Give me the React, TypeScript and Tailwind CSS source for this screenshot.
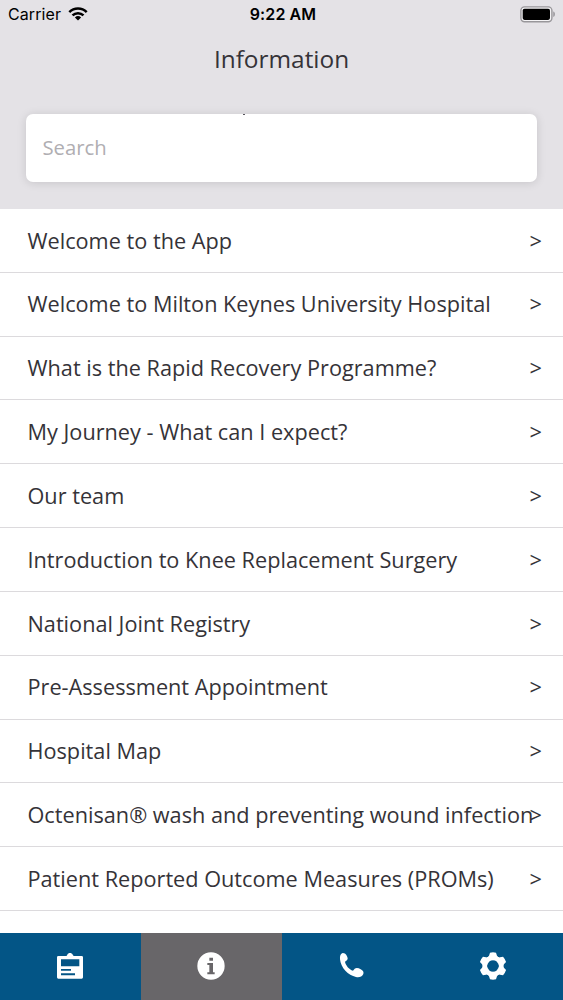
const topics = [
  "Welcome to the App",
  "Welcome to Milton Keynes University Hospital",
  "What is the Rapid Recovery Programme?",
  "My Journey - What can I expect?",
  "Our team",
  "Introduction to Knee Replacement Surgery",
  "National Joint Registry",
  "Pre-Assessment Appointment",
  "Hospital Map",
  "Octenisan® wash and preventing wound infection",
  "Patient Reported Outcome Measures (PROMs)",
];

function WifiIcon() {
  return (
    <svg width="20" height="14" viewBox="0 0 20 14" fill="none" stroke="black" strokeWidth="2.5">
      <path d="M1.3 5.1a12.3 12.3 0 0 1 17.4 0" />
      <path d="M4.5 8.4a7.8 7.8 0 0 1 11 0" />
      <path d="M10 13.6 6.9 10.5a4.5 4.5 0 0 1 6.2 0Z" fill="black" stroke="none" />
    </svg>
  );
}

function BatteryIcon() {
  return (
    <svg width="36" height="17" viewBox="0 0 36 17">
      <rect x="0.9" y="0.9" width="31" height="14.8" rx="3.6" fill="#f4f3f5" stroke="#98969a" strokeWidth="1.4" />
      <rect x="2.7" y="2.7" width="27.3" height="11.2" rx="1.8" fill="black" />
      <path d="M33.4 5.6c1.8.5 1.8 4.9 0 5.4Z" fill="#88868a" />
    </svg>
  );
}

function ClipboardIcon() {
  return (
    <svg width="28" height="28" viewBox="0 0 84 84" fill="white">
      <path
        fillRule="evenodd"
        d="M7 12H31C34 11 34 3 42 3S50 11 54 12H77Q81 12 81 16V76Q81 80 77 80H7Q3 80 3 76V16Q3 12 7 12ZM15 22V43H70V22ZM15 51V56.500H45V51ZM15 64V69.500H57V64Z"
      />
    </svg>
  );
}

function InfoIcon() {
  return (
    <svg width="28" height="28" viewBox="0 0 84 84" fill="white">
      <path
        fillRule="evenodd"
        d="M42 1A41 41 0 1 0 42 83A41 41 0 1 0 42 1ZM37 17H48V26H37ZM31 33H48V61H53V67H31V61H37V39H31Z"
      />
    </svg>
  );
}

function PhoneIcon() {
  return (
    <svg width="28" height="28" viewBox="84 81 84 84" fill="white">
      <path d="M98 84C104 84 108 87 111 94C114 100 114 104 109 107L105 110C107 121 117 133 129 137L134 131C139 128 146 129 152 133C159 137 162 141 160 147C156 155 148 158 138 156C115 152 92 128 90 103C89 92 92 86 98 84Z" />
    </svg>
  );
}

function GearIcon() {
  const tooth = "M-9 -40Q0 -42 9 -40L12 -31Q14 -27 20 -24L0 -14L-20 -24Q-14 -27 -12 -31Z";
  return (
    <svg width="28" height="28" viewBox="-42 -42 84 84" fill="white">
      <circle r="23.500" fill="none" stroke="white" strokeWidth="13" />
      {[0, 60, 120, 180, 240, 300].map((angle) => (
        <path key={angle} d={tooth} transform={`rotate(${angle})`} />
      ))}
      <circle r="17" fill="#035586" />
    </svg>
  );
}

const tabs = [
  { label: "Plan", active: false, icon: <ClipboardIcon /> },
  { label: "Information", active: true, icon: <InfoIcon /> },
  { label: "Call", active: false, icon: <PhoneIcon /> },
  { label: "Settings", active: false, icon: <GearIcon /> },
];

export default function App() {
  return (
    <div className="flex h-[1000px] w-[563px] flex-col overflow-hidden bg-white font-['Open_Sans',sans-serif] text-[#353338]">
      <header className="h-[209px] shrink-0 bg-[#e4e2e6]">
        <div className="grid h-7 grid-cols-3 items-center pl-2 pr-[7px] font-['Inter',sans-serif] text-black">
          <div className="flex items-center gap-[7px]">
            <span className="text-[16px] tracking-[0.1px]">Carrier</span>
            <WifiIcon />
          </div>
          <span className="pl-[2px] text-center text-[16px] font-semibold tracking-[0.1px]">9:22 AM</span>
          <div className="flex justify-end">
            <BatteryIcon />
          </div>
        </div>
        <h1 className="mt-[14px] text-center text-[24.4px] leading-[34px]">Information</h1>
        <div className="relative mx-[26px] mt-[38px]">
          <input
            type="text"
            placeholder="Search"
            aria-label="Search"
            className="block h-[68px] w-full rounded-[7px] bg-white px-[16.5px] pb-[3px] text-[20.3px] shadow-[0_1px_10px_rgba(0,0,0,0.13)] outline-none placeholder:text-[#b0aeb2]"
          />
          <span className="absolute left-[217px] top-0 h-px w-[2px] bg-[#55535a]" />
        </div>
      </header>

      <ul className="min-h-0 flex-1 overflow-hidden">
        {topics.map((topic) => (
          <li
            key={topic}
            className="flex h-[63.82px] items-center border-b-[1.5px] border-[#dcdadd] pl-[27.5px] pr-[21px] pt-px text-[21.7px]"
          >
            <span className="min-w-0 flex-1 whitespace-nowrap">{topic}</span>
            <span>&gt;</span>
          </li>
        ))}
      </ul>

      <nav className="grid h-[67px] shrink-0 grid-cols-4 bg-[#035586]">
        {tabs.map((tab) => (
          <button
            key={tab.label}
            aria-label={tab.label}
            className={
              tab.active
                ? "flex items-center justify-center bg-[#686669] pb-[2px]"
                : "flex items-center justify-center pb-[2px]"
            }
          >
            {tab.icon}
          </button>
        ))}
      </nav>
    </div>
  );
}
